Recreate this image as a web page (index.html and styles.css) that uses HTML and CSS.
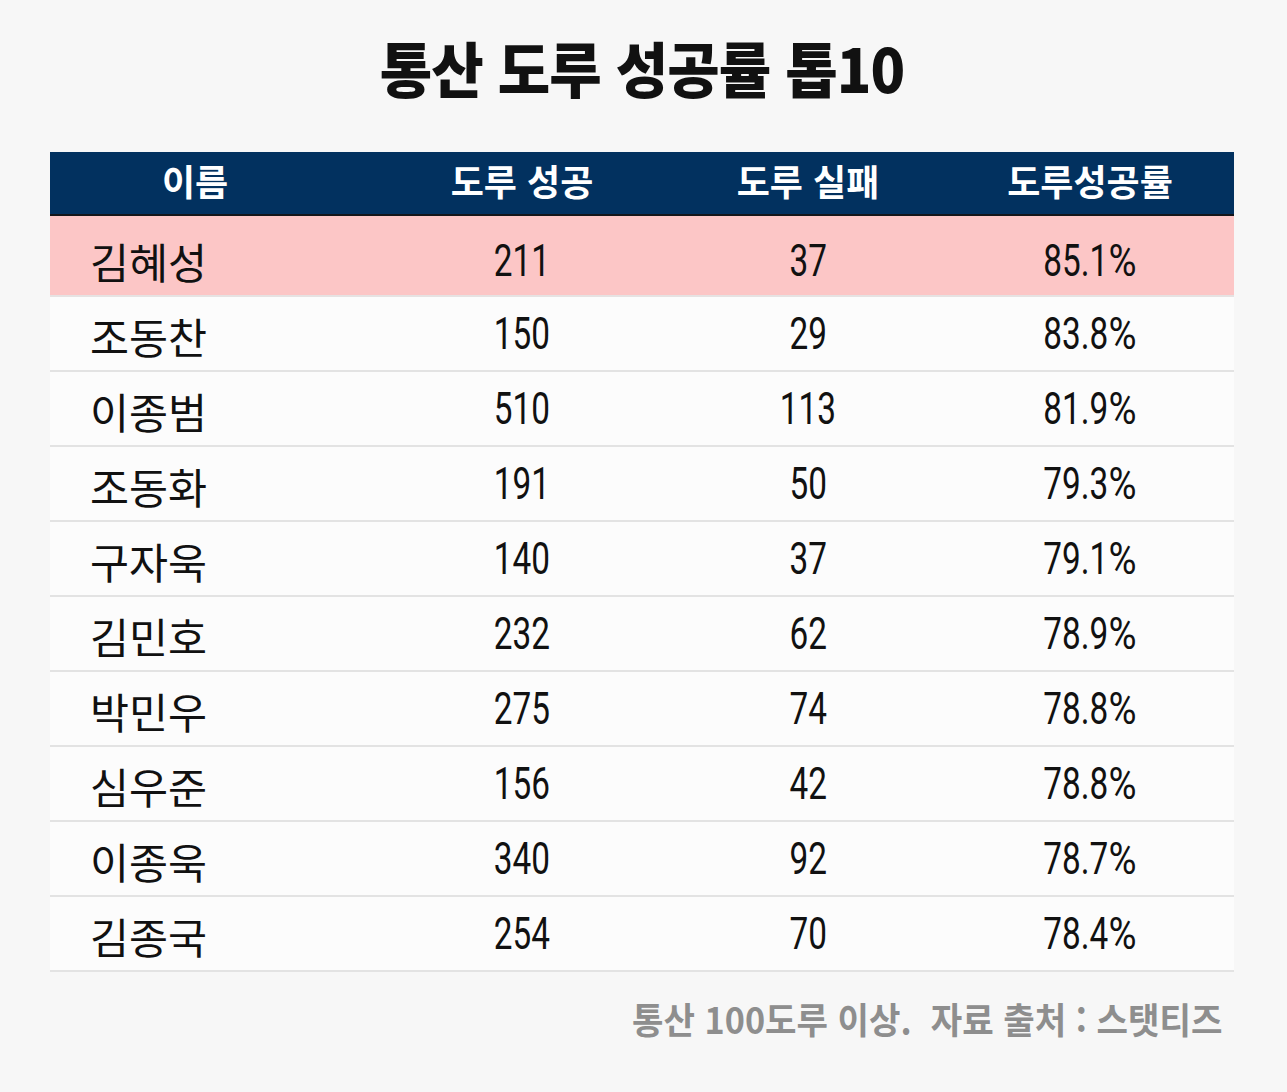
FILE: index.html
```html
<!DOCTYPE html>
<html lang="ko">
<head>
<meta charset="utf-8">
<title>통산 도루 성공률 톱10</title>
<link rel="stylesheet" href="styles.css">
</head>
<body>
<div class="page">
  <h1 class="title"><span class="sqt">통산 도루 성공률 톱10</span></h1>
  <div class="table">
    <div class="row head">
      <div class="cell c1"><span class="sq">이름</span></div>
      <div class="cell"><span class="sq">도루 성공</span></div>
      <div class="cell"><span class="sq">도루 실패</span></div>
      <div class="cell"><span class="sq">도루성공률</span></div>
    </div>
    <div class="row hl">
      <div class="cell name"><span class="sqn">김혜성</span></div>
      <div class="cell num"><span class="sqd">211</span></div>
      <div class="cell num"><span class="sqd">37</span></div>
      <div class="cell num"><span class="sqd">85.1<span class="pct">%</span></span></div>
    </div>
    <div class="row">
      <div class="cell name"><span class="sqn">조동찬</span></div>
      <div class="cell num"><span class="sqd">150</span></div>
      <div class="cell num"><span class="sqd">29</span></div>
      <div class="cell num"><span class="sqd">83.8<span class="pct">%</span></span></div>
    </div>
    <div class="row">
      <div class="cell name"><span class="sqn">이종범</span></div>
      <div class="cell num"><span class="sqd">510</span></div>
      <div class="cell num"><span class="sqd">113</span></div>
      <div class="cell num"><span class="sqd">81.9<span class="pct">%</span></span></div>
    </div>
    <div class="row">
      <div class="cell name"><span class="sqn">조동화</span></div>
      <div class="cell num"><span class="sqd">191</span></div>
      <div class="cell num"><span class="sqd">50</span></div>
      <div class="cell num"><span class="sqd">79.3<span class="pct">%</span></span></div>
    </div>
    <div class="row">
      <div class="cell name"><span class="sqn">구자욱</span></div>
      <div class="cell num"><span class="sqd">140</span></div>
      <div class="cell num"><span class="sqd">37</span></div>
      <div class="cell num"><span class="sqd">79.1<span class="pct">%</span></span></div>
    </div>
    <div class="row">
      <div class="cell name"><span class="sqn">김민호</span></div>
      <div class="cell num"><span class="sqd">232</span></div>
      <div class="cell num"><span class="sqd">62</span></div>
      <div class="cell num"><span class="sqd">78.9<span class="pct">%</span></span></div>
    </div>
    <div class="row">
      <div class="cell name"><span class="sqn">박민우</span></div>
      <div class="cell num"><span class="sqd">275</span></div>
      <div class="cell num"><span class="sqd">74</span></div>
      <div class="cell num"><span class="sqd">78.8<span class="pct">%</span></span></div>
    </div>
    <div class="row">
      <div class="cell name"><span class="sqn">심우준</span></div>
      <div class="cell num"><span class="sqd">156</span></div>
      <div class="cell num"><span class="sqd">42</span></div>
      <div class="cell num"><span class="sqd">78.8<span class="pct">%</span></span></div>
    </div>
    <div class="row">
      <div class="cell name"><span class="sqn">이종욱</span></div>
      <div class="cell num"><span class="sqd">340</span></div>
      <div class="cell num"><span class="sqd">92</span></div>
      <div class="cell num"><span class="sqd">78.7<span class="pct">%</span></span></div>
    </div>
    <div class="row">
      <div class="cell name"><span class="sqn">김종국</span></div>
      <div class="cell num"><span class="sqd">254</span></div>
      <div class="cell num"><span class="sqd">70</span></div>
      <div class="cell num"><span class="sqd">78.4<span class="pct">%</span></span></div>
    </div>
  </div>
  <p class="note"><span class="sqf">통산 100도루 이상.&nbsp; 자료 출처 : 스탯티즈</span></p>
</div>
</body>
</html>
```

FILE: styles.css
```css
html, body {
  margin: 0;
  padding: 0;
}
body {
  background: #f7f7f7;
  font-family: "Noto Sans CJK KR", "Noto Sans", sans-serif;
  color: #111;
}
.page {
  width: 1287px;
  height: 1092px;
  box-sizing: border-box;
  padding: 0 53px 0 50px;
}
.title {
  margin: 0;
  height: 152px;
  display: flex;
  align-items: center;
  justify-content: center;
  padding-bottom: 20px;
  box-sizing: border-box;
  font-size: 60px;
  font-weight: 900;
  letter-spacing: -1px;
  color: #111;
}
.sqt {
  display: inline-block;
  transform: scaleX(0.95);
}
.sq {
  display: inline-block;
}
.table {
  width: 1184px;
}
.row {
  display: grid;
  grid-template-columns: 324px 296px 276px 288px;
  height: 75px;
  border-bottom: 2px solid #e3e3e3;
  background: #fcfcfc;
  box-sizing: border-box;
}
.row.head {
  height: 64px;
  background: #02315f;
  border-bottom: 2px solid #14161a;
  color: #fff;
  font-size: 36px;
  font-weight: 700;
}
.row.hl {
  height: 81px;
  background: #fcc6c6;
  border-bottom: 2px solid #e6e2e2;
}
.cell {
  display: flex;
  align-items: center;
  justify-content: center;
}
.head .cell {
  padding-bottom: 6px;
}
.head .c1 {
  padding-right: 34px;
}
.cell.name {
  justify-content: flex-start;
  padding-left: 40px;
  font-size: 42px;
  font-weight: 400;
  padding-top: 4px;
}
.hl .cell {
  padding-top: 10px;
}
.sqn {
  display: inline-block;
  transform: scaleX(1.01);
  transform-origin: left center;
}
.cell.num {
  font-family: Roboto, "Liberation Sans", sans-serif;
  font-size: 45px;
  font-weight: 400;
}
.sqd {
  display: inline-block;
  transform: scaleX(0.74);
}
.pct {
  display: inline-block;
  transform: scaleX(1.15);
  transform-origin: left center;
  margin-right: 5px;
}
.note {
  margin: 20px 0 0 0;
  width: 1172px;
  text-align: right;
  color: #8e8e8e;
  font-size: 36px;
  font-weight: 700;
}
.sqf {
  display: inline-block;
  transform: scaleX(0.95);
  transform-origin: right center;
}
```
